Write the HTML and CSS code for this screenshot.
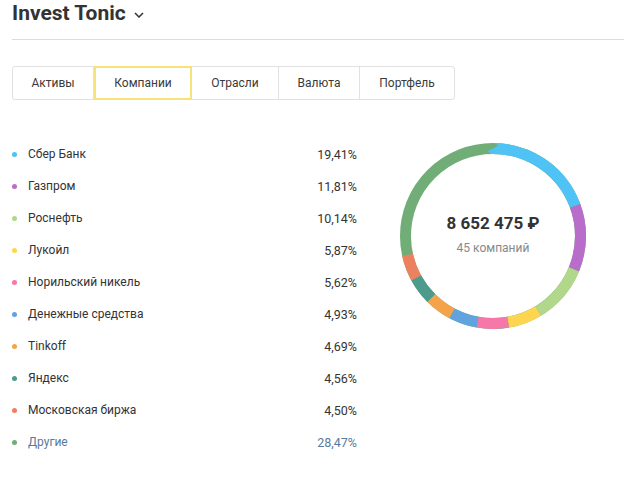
FILE: index.html
```html
<!DOCTYPE html>
<html lang="ru">
<head>
<meta charset="utf-8">
<link rel="stylesheet" href="styles.css">
</head>
<body>
<div class="page">
  <header class="header">
    <h1 class="title">Invest Tonic</h1>
    <svg class="chev" width="10" height="6" viewBox="0 0 10 6"><polyline points="1,1 5,5 9,1" fill="none" stroke="#333" stroke-width="1.5"/></svg>
  </header>
  <nav class="tabs">
    <div class="tab tab-w1">Активы</div>
    <div class="tab tab-w2 active">Компании</div>
    <div class="tab tab-w3">Отрасли</div>
    <div class="tab tab-w4">Валюта</div>
    <div class="tab tab-w5">Портфель</div>
  </nav>
  <main class="content">
    <ul class="list">
      <li class="row"><span class="dot c1"></span><span class="name">Сбер Банк</span><span class="pct">19,41%</span></li>
      <li class="row"><span class="dot c2"></span><span class="name">Газпром</span><span class="pct">11,81%</span></li>
      <li class="row"><span class="dot c3"></span><span class="name">Роснефть</span><span class="pct">10,14%</span></li>
      <li class="row"><span class="dot c4"></span><span class="name">Лукойл</span><span class="pct">5,87%</span></li>
      <li class="row"><span class="dot c5"></span><span class="name">Норильский никель</span><span class="pct">5,62%</span></li>
      <li class="row"><span class="dot c6"></span><span class="name">Денежные средства</span><span class="pct">4,93%</span></li>
      <li class="row"><span class="dot c7"></span><span class="name">Tinkoff</span><span class="pct">4,69%</span></li>
      <li class="row"><span class="dot c8"></span><span class="name">Яндекс</span><span class="pct">4,56%</span></li>
      <li class="row"><span class="dot c9"></span><span class="name">Московская биржа</span><span class="pct">4,50%</span></li>
      <li class="row other"><span class="dot c10"></span><span class="name">Другие</span><span class="pct">28,47%</span></li>
    </ul>
    <div class="chart">
      <svg class="donut" width="186" height="186" viewBox="0 0 186 186">
        <g transform="rotate(-90 93 93)" fill="none" stroke-width="11">
          <circle cx="93" cy="93" r="87.5" stroke="#71ad76"/>
          <circle cx="93" cy="93" r="87.5" pathLength="100" stroke="#4fc3f5" stroke-dasharray="19.41 80.59" stroke-dashoffset="0"/>
          <circle cx="93" cy="93" r="87.5" pathLength="100" stroke="#b96dcb" stroke-dasharray="11.81 88.19" stroke-dashoffset="-19.41"/>
          <circle cx="93" cy="93" r="87.5" pathLength="100" stroke="#b1d88a" stroke-dasharray="10.14 89.86" stroke-dashoffset="-31.22"/>
          <circle cx="93" cy="93" r="87.5" pathLength="100" stroke="#fdd54f" stroke-dasharray="5.87 94.13" stroke-dashoffset="-41.36"/>
          <circle cx="93" cy="93" r="87.5" pathLength="100" stroke="#f678a8" stroke-dasharray="5.62 94.38" stroke-dashoffset="-47.23"/>
          <circle cx="93" cy="93" r="87.5" pathLength="100" stroke="#60a3df" stroke-dasharray="4.93 95.07" stroke-dashoffset="-52.85"/>
          <circle cx="93" cy="93" r="87.5" pathLength="100" stroke="#f4a34b" stroke-dasharray="4.69 95.31" stroke-dashoffset="-57.78"/>
          <circle cx="93" cy="93" r="87.5" pathLength="100" stroke="#4d9b8d" stroke-dasharray="4.56 95.44" stroke-dashoffset="-62.47"/>
          <circle cx="93" cy="93" r="87.5" pathLength="100" stroke="#ec815f" stroke-dasharray="4.50 95.50" stroke-dashoffset="-67.03"/>
        </g>
      </svg>
      <div class="center">
        <div class="total">8 652 475 ₽</div>
        <div class="count">45 компаний</div>
      </div>
    </div>
  </main>
</div>
</body>
</html>
```
FILE: styles.css
```css
* { box-sizing: border-box; }
html, body { margin: 0; padding: 0; background: #fff; }
body { font-family: Roboto, "Liberation Sans", Arial, sans-serif; color: #333; }
.page { padding: 0 0 0 12px; }
.header {
  height: 40px;
  display: flex;
  align-items: flex-start;
  border-bottom: 1px solid #dcdcdc;
}
.title {
  margin: 0;
  font-size: 21px;
  font-weight: 700;
  line-height: 26px;
  color: #333;
}
.chev { margin: 12px 0 0 8px; }
.tabs {
  margin-top: 26px;
  display: flex;
  width: 443px;
  height: 34px;
  border: 1px solid #e1e1e1;
  border-radius: 3px;
}
.tab {
  display: flex;
  align-items: center;
  justify-content: center;
  font-size: 12px;
  color: #3a3a3a;
  border-right: 1px solid #e1e1e1;
}
.tab:last-child { border-right: none; }
.tab-w1 { width: 81px; }
.tab-w2 { width: 98px; }
.tab-w3 { width: 87px; }
.tab-w4 { width: 81px; }
.tab-w5 { flex: 1; }
.tab.active {
  border: 2px solid #f7e27a;
  margin: -1px 0;
}
.content {
  display: flex;
  align-items: flex-start;
  margin-top: 38px;
}
.list {
  list-style: none;
  margin: 0;
  padding: 0;
  width: 345px;
}
.row {
  height: 32px;
  display: flex;
  align-items: center;
  font-size: 12px;
  color: #333;
}
.dot {
  width: 5px;
  height: 5px;
  border-radius: 50%;
  margin: 0 11px 0 0;
}
.name { flex: 1; }
.pct { text-align: right; font-size: 12.5px; }
.other { color: #587a9d; }
.c1 { background: #4fc3f5; }
.c2 { background: #b96dcb; }
.c3 { background: #b1d88a; }
.c4 { background: #fdd54f; }
.c5 { background: #f678a8; }
.c6 { background: #60a3df; }
.c7 { background: #f4a34b; }
.c8 { background: #4d9b8d; }
.c9 { background: #ec815f; }
.c10 { background: #71ad76; }
.chart {
  position: relative;
  width: 186px;
  height: 186px;
  margin: 5px 0 0 43px;
}
.donut { display: block; }
.center {
  position: absolute;
  inset: 0;
  display: flex;
  flex-direction: column;
  align-items: center;
  justify-content: center;
}
.total {
  font-size: 17px;
  font-weight: 700;
  color: #333;
  margin-top: -4px;
}
.count {
  font-size: 12px;
  color: #888;
  margin-top: 8px;
}
```
